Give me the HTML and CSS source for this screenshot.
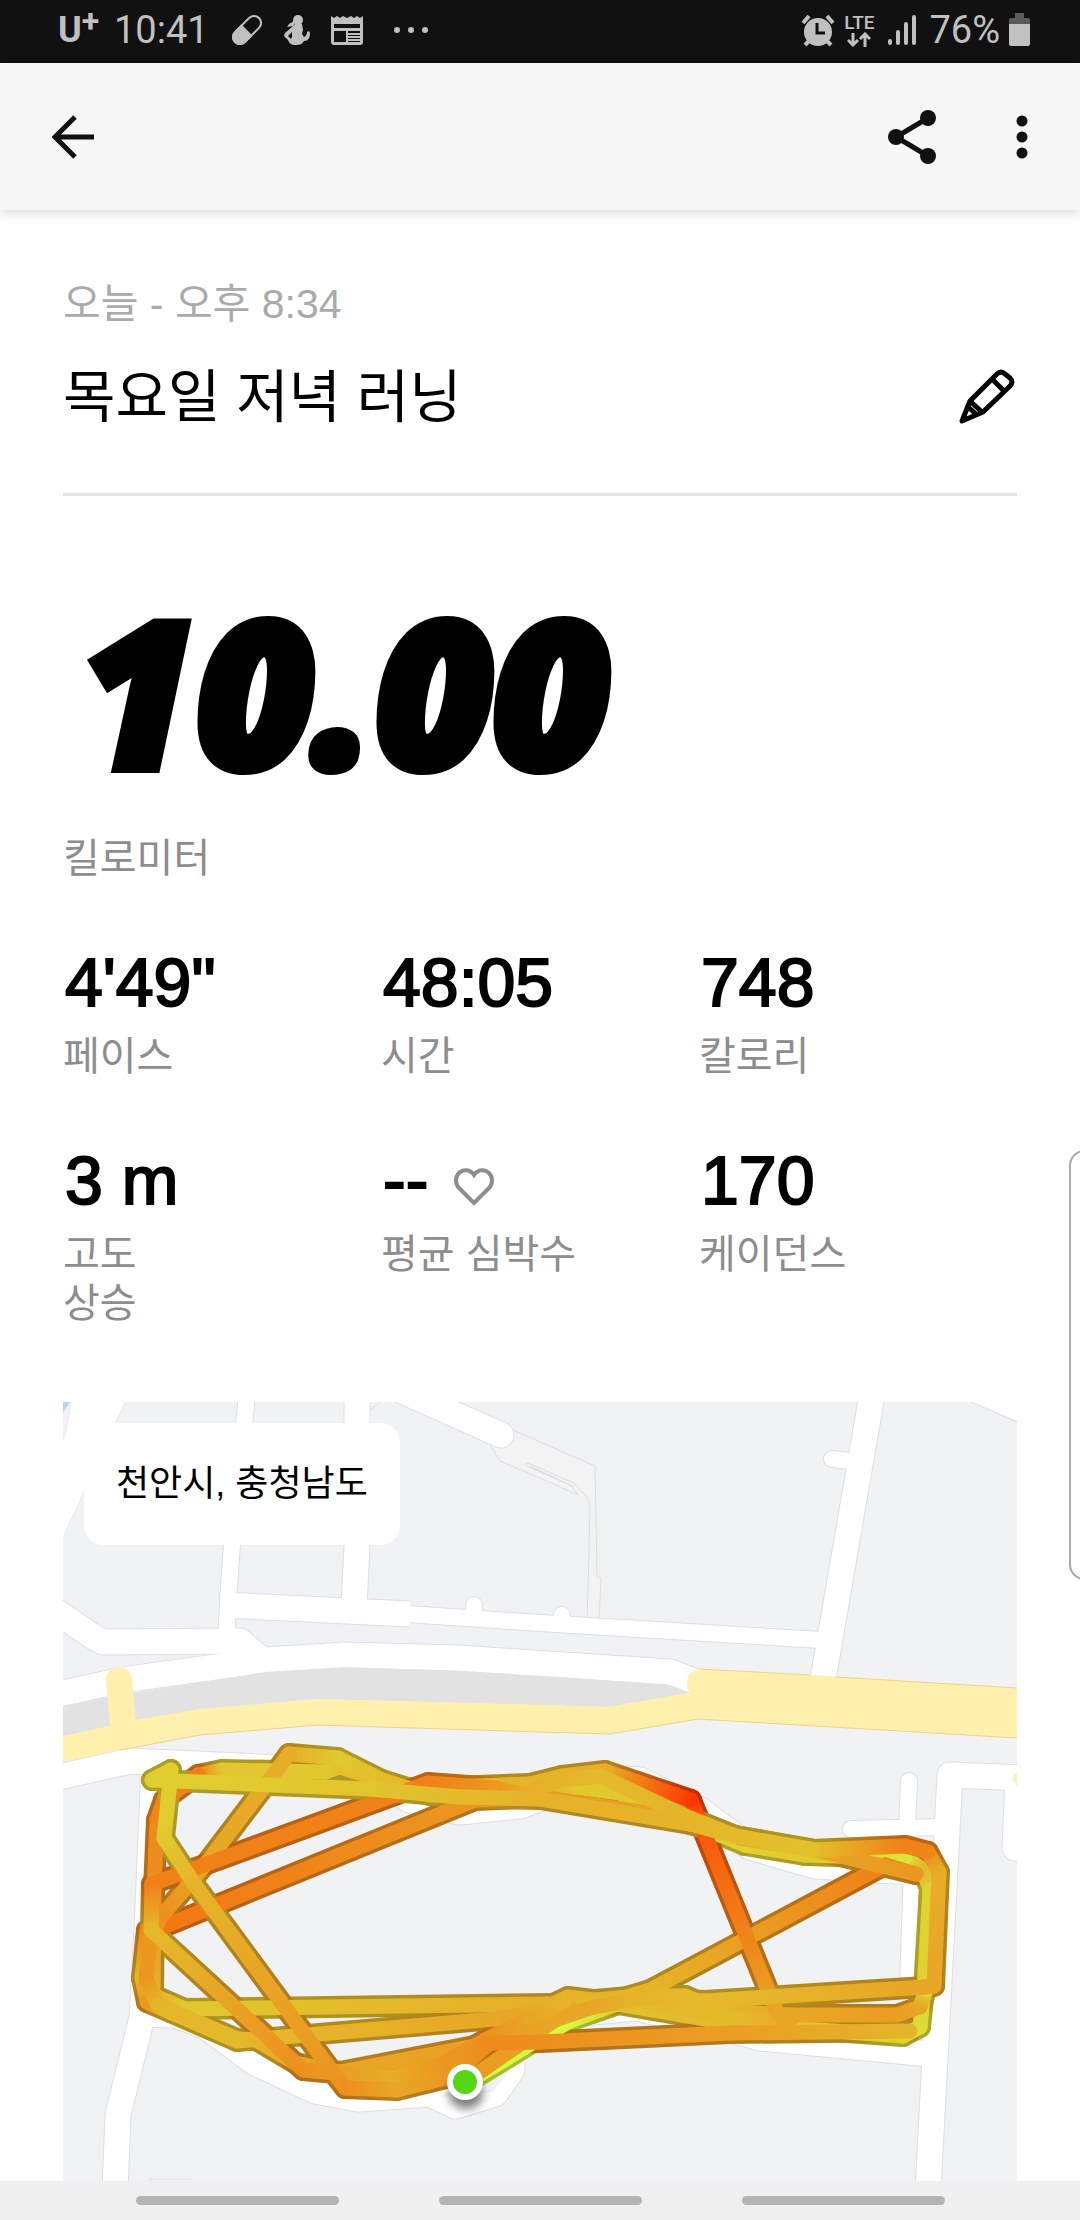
FILE: index.html
```html
<!DOCTYPE html>
<html lang="ko">
<head>
  <meta charset="UTF-8">
  <meta name="viewport" content="width=device-width, initial-scale=1">
  <title>목요일 저녁 러닝</title>
  <link rel="stylesheet" href="styles.css">
</head>
<body>

  <div class="status-bar">
    <div class="status-left">
      <span class="carrier">U<sup>+</sup></span>
      <span class="clock">10:41</span>
      <svg class="icon-pill" width="32" height="32" viewBox="0 0 32 32">
        <g transform="rotate(45 16 16)">
          <rect x="9" y="-1" width="14" height="34" rx="7" fill="none" stroke="#c0c0c0" stroke-width="2"/>
          <path d="M8 16h16v10a8 8 0 0 1-16 0z" fill="#c0c0c0"/>
        </g>
      </svg>
      <svg class="icon-person" width="26" height="30" viewBox="0 0 26 30">
        <circle cx="14" cy="5" r="5" fill="#c0c0c0"/>
        <path d="M3 12l2-3 5-3 1 2-2 3z" fill="#c0c0c0"/>
        <path d="M11 9h7l1 6-1 4 2 3q3-1 3-5l2-1 1 2c0 5-2 8-6 8-2 3-4 4-8 4-5 0-7-2-8-5l-4-4 1-3 8-7z" fill="#c0c0c0"/>
        <path d="M4 21l4-4v5l-1 2z" fill="#111"/>
      </svg>
      <svg class="icon-news" width="32" height="29" viewBox="0 0 32 29">
        <path d="M0 0l3 2 3-2 3 2 3-2 4 2 4-2 3 2 3-2 3 2 3-2v26q0 3-3 3H3q-3 0-3-3z" fill="#c0c0c0"/>
        <path d="M3 8h26v4H3zM3 15h12v11H3zM17 15h12v2H17zM17 19h12v1H17zM17 22h12v1H17zM17 25h12v1H17z" fill="#111"/>
      </svg>
      <svg class="icon-dots" width="36" height="8" viewBox="0 0 36 8" fill="#c0c0c0">
        <circle cx="4" cy="4" r="3"/><circle cx="18" cy="4" r="3"/><circle cx="32" cy="4" r="3"/>
      </svg>
    </div>
    <div class="status-right">
      <svg width="34" height="33" viewBox="0 0 34 33">
        <path d="M2 9l6-7M32 9l-6-7" stroke="#c0c0c0" stroke-width="4"/>
        <path d="M4 31l5-5M30 31l-5-5" stroke="#c0c0c0" stroke-width="4"/>
        <circle cx="17" cy="18" r="14" fill="#c0c0c0"/>
        <path d="M16 9v10h8" fill="none" stroke="#111" stroke-width="3"/>
      </svg>
      <div class="network">
        <span>LTE</span>
        <svg width="24" height="15" viewBox="0 0 24 15" fill="none" stroke="#c0c0c0" stroke-width="3">
          <path d="M6 1v12M1 8l5 5 5-5M18 15V2M13 7l5-5 5 5"/>
        </svg>
      </div>
      <svg class="icon-signal" width="28" height="32" viewBox="0 0 28 32" stroke="#c0c0c0" stroke-width="4" stroke-linecap="round">
        <path d="M2 27v2M10 18v11M18 10v19M26 3v26"/>
      </svg>
      <span class="battery-text">76%</span>
      <svg width="22" height="34" viewBox="0 0 22 34">
        <path d="M6 0h9v5h4q2 0 2 2v5H0V7q0-2 2-2h4z" fill="#5a5a5a"/>
        <path d="M0 11h21v20q0 2-2 2H2q-2 0-2-2z" fill="#c0c0c0"/>
      </svg>
    </div>
  </div>

  <header class="toolbar">
    <button class="icon-btn" aria-label="뒤로">
      <svg width="42" height="44" viewBox="0 0 42 44" fill="none" stroke="#111" stroke-width="5">
        <path d="M42 22H4M23 2L3 22l20 20"/>
      </svg>
    </button>
    <div class="toolbar-actions">
      <button class="icon-btn" aria-label="공유">
        <svg width="48" height="56" viewBox="0 0 48 56">
          <path d="M40 9L8 28l32 19" fill="none" stroke="#111" stroke-width="5"/>
          <g fill="#111"><circle cx="40" cy="9" r="8"/><circle cx="8" cy="28" r="8"/><circle cx="40" cy="47" r="8"/></g>
        </svg>
      </button>
      <button class="icon-btn" aria-label="더보기">
        <svg width="12" height="44" viewBox="0 0 12 44" fill="#111">
          <circle cx="6" cy="6" r="5.5"/><circle cx="6" cy="22" r="5.5"/><circle cx="6" cy="38" r="5.5"/>
        </svg>
      </button>
    </div>
  </header>

  <main>
    <p class="date">오늘 - 오후 8:34</p>
    <div class="title-row">
      <h1>목요일 저녁 러닝</h1>
      <button class="icon-btn" aria-label="이름 수정">
        <svg width="58" height="58" viewBox="0 0 58 58" fill="none" stroke="#000" stroke-width="5" stroke-linejoin="round">
          <path d="M3 53l8-20L38 6q4-4 8 0l5 4q4 4 0 8L24 44z"/>
          <path d="M34 12l11 11M11 33l13 12M8 38l10 9"/>
        </svg>
      </button>
    </div>

    <p class="distance">10.00</p>
    <p class="label">킬로미터</p>

    <div class="stats">
      <div class="stat">
        <p class="value">4'49"</p>
        <p class="label">페이스</p>
      </div>
      <div class="stat">
        <p class="value">48:05</p>
        <p class="label">시간</p>
      </div>
      <div class="stat">
        <p class="value">748</p>
        <p class="label">칼로리</p>
      </div>
      <div class="stat">
        <p class="value">3 m</p>
        <p class="label">고도<br>상승</p>
      </div>
      <div class="stat">
        <p class="value">--
          <svg class="heart" width="40" height="38" viewBox="0 0 40 38" fill="none" stroke="#8d8d8d" stroke-width="4">
            <path d="M20 35L5 20C1 16 1 9 5 5s11-4 15 2c4-6 11-6 15-2s4 11 0 15z"/>
          </svg>
        </p>
        <p class="label">평균 심박수</p>
      </div>
      <div class="stat">
        <p class="value">170</p>
        <p class="label">케이던스</p>
      </div>
    </div>

    <div class="map">
      <svg viewBox="63 1402 954 779" preserveAspectRatio="xMidYMin slice">
        <defs>
          <g id="wide-roads" fill="none" stroke-linejoin="round">
            <path d="M357 1395V1545L354 1606"/>
            <path d="M225 1605L410 1614"/>
            <path d="M50 1607L92 1636L103 1642L240 1641L262 1660"/>
            <path d="M50 1696L122 1680L265 1660L345 1655L457 1658L670 1672L710 1687"/>
            <path d="M872 1395L822 1685"/>
            <path d="M400 1390L501 1435" stroke-linecap="round"/>
            <path d="M50 1779L130 1761L280 1768L360 1775L420 1805L460 1812L520 1806L600 1778L640 1780L700 1810L750 1847L815 1866L910 1872"/>
            <path d="M154 1765L147 1930L142 2017L118 2115L115 2190"/>
            <path d="M142 2014L175 2015L205 2026L255 2063L315 2091L358 2099L430 2094L455 2106L495 2094L512 2070L512 2052L560 2015L636 2008L735 2031L760 2038L930 2054"/>
            <path d="M928 2190L950 1775L1025 1778"/>
            <path d="M1018 1780L1015 1848" stroke-linecap="round"/>
          </g>
          <g id="side-roads" fill="none" stroke-linejoin="round" stroke-linecap="round">
            <path d="M247 1395L232 1545L228 1600L226 1645"/>
            <path d="M408 1614L540 1623L820 1640"/>
            <path d="M474 1618V1605M562 1623V1615"/>
            <path d="M832 1459L860 1462"/>
            <path d="M909 1781L907 1827M851 1829L942 1827"/>
            <path d="M912 1870L906 2045"/>
          </g>
        </defs>

        <rect x="63" y="1402" width="954" height="900" fill="#f0f2f4"/>
        <path class="path-area" d="M490 1445L500 1461L540 1478L578 1495L570 1485L529 1467Q523 1464 528 1463L574 1483L587 1497Q590 1502 590 1507L588 1590L587 1622H599L601 1578L597 1577L595 1466L513 1430z"/>
        <path class="path-area" d="M370 1410L380 1402M530 1466L574 1487"/>

        <g class="road-edge">
          <use href="#wide-roads" stroke-width="27"/>
          <use href="#side-roads" stroke-width="18"/>
          <path d="M72 1400H126L115 1423L84 1491L63 1537H50V1480L66 1433z"/>
          <path d="M971 1402L1017 1422H1030V1390z"/>
        </g>
        <g class="road-fill">
          <use href="#wide-roads" stroke-width="25"/>
          <use href="#side-roads" stroke-width="16"/>
          <path d="M72 1400H126L115 1423L84 1491L63 1537H50V1480L66 1433z" stroke="none"/>
          <path d="M972 1402L1017 1421H1030V1390z" stroke="none"/>
        </g>
        <path d="M63 1402H70L63 1413z" fill="#a6d9fb"/>

        <path d="M63 1706L107 1697L265 1672L345 1667L457 1671L560 1677L670 1685L690 1693L608 1707L540 1705L317 1699L200 1709L63 1736z" fill="#e2e2e2"/>
        <path d="M60 1737L135 1720L200 1709L317 1699L540 1705L608 1707L690 1693C684 1684 687 1669 700 1669L810 1675L1020 1688V1738L698 1719L610 1734L540 1732L318 1725L200 1735L120 1750L60 1762z" fill="#fff0ad"/>
        <path d="M119 1680L123 1726" stroke="#fff0ad" stroke-width="26" stroke-linecap="round"/>
        <path d="M120 1750L200 1735L318 1725L540 1732L610 1734L698 1719L1017 1738M700 1669L810 1675M836 1677L1017 1688" fill="none" stroke="#f1d187" stroke-width="1"/>
        <circle cx="1021" cy="1779" r="8" fill="#fff0ad"/>
        <path d="M441 2097L470 2075L510 2070L493 2092z" fill="#f0f2f4"/>
        <path d="M150 2181V2179H192" fill="none" stroke="#dcdee1"/>

        <g id="route"></g>

        <ellipse cx="466" cy="2094" rx="17" ry="15" class="pin-shadow"/>
        <circle cx="465" cy="2082" r="18" fill="#fff"/>
        <circle cx="465" cy="2082" r="12" fill="#55d715"/>
      </svg>
      <span class="place">천안시, 충청남도</span>
    </div>
  </main>

  <div class="edge-panel"></div>

  <nav class="nav-bar">
    <button aria-label="최근 앱"></button>
    <button aria-label="홈"></button>
    <button aria-label="이전"></button>
  </nav>

  <script src="route.js"></script>
</body>
</html>
```
FILE: styles.css
```css
* {
  box-sizing: border-box;
}
body {
  margin: 0;
  min-height: 100vh;
  display: flex;
  flex-direction: column;
  position: relative;
  overflow-x: hidden;
  background: #fff;
  color: #000;
  font-family: "Liberation Sans", "Noto Sans CJK KR", sans-serif;
}
p, h1 {
  margin: 0;
}
svg {
  display: block;
}
button {
  border: 0;
  padding: 0;
  background: none;
}

/* status bar */
.status-bar {
  display: flex;
  justify-content: space-between;
  height: 63px;
  padding: 0 49px 3px 58px;
  background: #111;
  color: #c0c0c0;
  font-family: Roboto, sans-serif;
  font-size: 38px;
}
.status-left, .status-right {
  display: flex;
  align-items: center;
}
.carrier {
  font-weight: 700;
  font-size: 36px;
  width: 56px;
  white-space: nowrap;
}
.carrier sup {
  font-size: 32px;
  line-height: 0;
  vertical-align: 10px;
}
.icon-pill {
  margin-left: 22px;
}
.icon-person {
  margin-left: 21px;
}
.icon-news {
  margin-left: 21px;
}
.icon-dots {
  margin-left: 30px;
}
.network {
  display: flex;
  flex-direction: column;
  align-items: center;
  margin: 0 14px 0 9px;
  font-size: 19px;
  font-weight: 500;
  line-height: 18px;
}
.battery-text {
  margin: 0 9px 0 13px;
}

/* toolbar */
.toolbar {
  display: flex;
  justify-content: space-between;
  align-items: center;
  height: 147px;
  padding: 0 52px;
  background: #f7f7f7;
  box-shadow: 0 1px 12px rgba(0, 0, 0, 0.2);
}
.toolbar-actions {
  display: flex;
  align-items: center;
  gap: 80px;
}

/* run summary */
main {
  flex: 1;
  display: flex;
  flex-direction: column;
  padding: 70px 63px 0;
}
.date {
  color: #aaa;
  font-size: 41px;
  line-height: 49px;
}
.title-row {
  display: flex;
  justify-content: space-between;
  align-items: center;
  margin-top: 28px;
  padding-bottom: 56px;
  border-bottom: 3px solid #e5e5e5;
}
h1 {
  font-size: 57px;
  font-weight: 400;
  line-height: 80px;
}
.distance {
  margin: 104px 0 54px;
  padding-left: 16px;
  font-family: "Open Sans", sans-serif;
  font-size: 202px;
  font-weight: 800;
  font-style: italic;
  line-height: 180px;
  -webkit-text-stroke: 10px #000;
}
.label {
  color: #8d8d8d;
  font-size: 40px;
  line-height: 49px;
}
.stats {
  display: grid;
  grid-template-columns: repeat(3, 1fr);
  row-gap: 59px;
  margin: 59px 0 74px;
}
.value {
  display: flex;
  align-items: center;
  gap: 26px;
  margin-bottom: 10px;
  padding-left: 2px;
  font-size: 68px;
  line-height: 80px;
  -webkit-text-stroke: 2px #000;
}
.heart {
  margin-top: 14px;
}

/* map */
.map {
  flex: 1;
  display: flex;
  position: relative;
  min-height: 600px;
  overflow: hidden;
}
.map svg {
  flex: 1;
  width: 100%;
}
.road-edge {
  fill: #dcdee1;
  stroke: #dcdee1;
}
.road-fill {
  fill: #fff;
  stroke: #fff;
}
.path-area {
  fill: #f3f3f3;
  stroke: #dedede;
}
.pin-shadow {
  fill: #000;
  opacity: 0.5;
  filter: blur(5px);
}
.place {
  position: absolute;
  left: 21px;
  top: 21px;
  padding: 36px 32px 37px;
  border-radius: 20px;
  background: #fff;
  font-size: 36px;
  line-height: 49px;
}

.edge-panel {
  position: absolute;
  right: -20px;
  top: 1150px;
  width: 31px;
  height: 430px;
  border: 2px solid #aaa;
  border-radius: 18px;
  background: #fff;
}

/* navigation bar */
.nav-bar {
  display: flex;
  justify-content: center;
  align-items: center;
  gap: 100px;
  height: 39px;
  background: #f0f0f0;
}
.nav-bar button {
  width: 203px;
  height: 9px;
  border-radius: 5px;
  background: #b4b4b4;
}
```
FILE: route.js
```js
// each lap: [x, y, pace]  pace 0 = slow (lime) ... 1 = fast (red)
const laps = [
  [[465,2084,0],[535,2041,0],[570,2021,0],[592,2013,.1],[618,2004,.3],[735,2024,.35],[903,2036,.2],[920,2027,.15],
   [924,1990,.2],[930,1888,.25],[921,1868,.35],[905,1858,.1],[805,1855,.25],[745,1845,.2],[620,1793,.25],[575,1787,.25],
   [540,1793,.45],[430,1795,.4],[340,1767,.3],[325,1772,.25],[222,1770,.25],[198,1775,.75],[164,1800,.7],[157,1820,.7],
   [154,1890,.65],[153,1995,.4],[185,2009,.25],[553,2004,.45],[568,1997,.4],[610,2002,.4],[650,1990,.4],[885,1865,.75]],
  [[885,1865,.75],[916,1874,.6],[815,1850,.5],[740,1838,.5],[695,1820,.5],[540,1797,.6],[475,1800,.6],[163,1927,.78],
   [147,1930,.7],[142,1978,.4],[147,2002,.6],[170,2012,.3],[237,2041,.35],[507,2018,.5],[562,2003,.4],[640,1996,.4],
   [685,1996,.35],[702,2003,.35],[735,2012,.4],[790,2015,.5],[897,2015,.55],[920,2007,.5],[926,1990,.2],[930,1890,.2]],
  [[562,2006,.4],[640,2001,.35],[740,2020,.35],[790,2021,.5],[777,2012,.5],[697,1815,.92],[691,1800,1],[605,1771,.45],[562,1776,.4],
   [530,1784,.4],[400,1789,.35],[338,1758,.25],[289,1754,.45],[205,1865,.5],[160,1918,.65],[150,1940,.6],[146,1980,.6],[158,2005,.4],
   [237,2039,.35],[256,2040,.4],[295,2063,.5],[340,2072,.5],[490,2043,.55],[570,2008,.5]],
  [[465,2082,.6],[555,2020,.5],[590,2008,.5],[640,1998,.4],[705,2001,.35],[925,1987,.5],[934,1986,.5],[939,1872,.45],[928,1852,.7],
   [905,1846,.75],[812,1850,.3],[735,1836,.35],[690,1818,.4],[600,1776,.35],[560,1780,.4],[525,1794,.45],[495,1788,.6],[428,1783,.75],
   [152,1884,.75],[151,1930,.35],[303,2070,.65],[390,2078,.45],[440,2065,.6],[485,2040,.65],[530,2018,.5],[565,2000,.4]],
  [[810,1849,.3],[735,1836,.35],[690,1824,.4],[540,1799,.42],[460,1797,.35],[370,1789,.28],[152,1780,.22],[171,1770,.22],[168,1800,.22],[164,1838,.25],
   [195,1885,.4],[331,2070,.6],[345,2088,.65],[397,2090,.5],[450,2077,.6],[490,2043,.68],[540,2042,.65],[730,2033,.55],[910,2031,.4]]
];

const ramp = [[214, 248, 62], [225, 200, 46], [232, 166, 38], [240, 128, 24], [255, 56, 0]];
const NS = 'http://www.w3.org/2000/svg';
const route = document.getElementById('route');
let count = 0;

function color(pace, shade) {
  const p = pace * 4;
  const i = Math.min(3, Math.floor(p));
  const c = ramp[i].map((v, k) => Math.round((v + (ramp[i + 1][k] - v) * (p - i)) * shade));
  return `rgb(${c})`;
}

function add(name, attrs, parent) {
  const el = document.createElementNS(NS, name);
  for (const key in attrs) el.setAttribute(key, attrs[key]);
  parent.appendChild(el);
  return el;
}

function drawLap(lap, width, shade) {
  for (let i = 1; i < lap.length; i++) {
    const [x1, y1, a] = lap[i - 1];
    const [x2, y2, b] = lap[i];
    const id = 'pace' + count++;
    const grad = add('linearGradient', { id, gradientUnits: 'userSpaceOnUse', x1, y1, x2, y2 }, route);
    add('stop', { offset: 0, 'stop-color': color(a, shade) }, grad);
    add('stop', { offset: 1, 'stop-color': color(b, shade) }, grad);
    add('path', {
      d: `M${x1} ${y1}L${x2} ${y2}`,
      stroke: `url(#${id})`,
      'stroke-width': width,
      'stroke-linecap': 'round'
    }, route);
  }
}

// dark outline of every lap goes under all the fills
laps.forEach(lap => drawLap(lap, 22, 0.77));
laps.forEach(lap => drawLap(lap, 15, 1));
```
